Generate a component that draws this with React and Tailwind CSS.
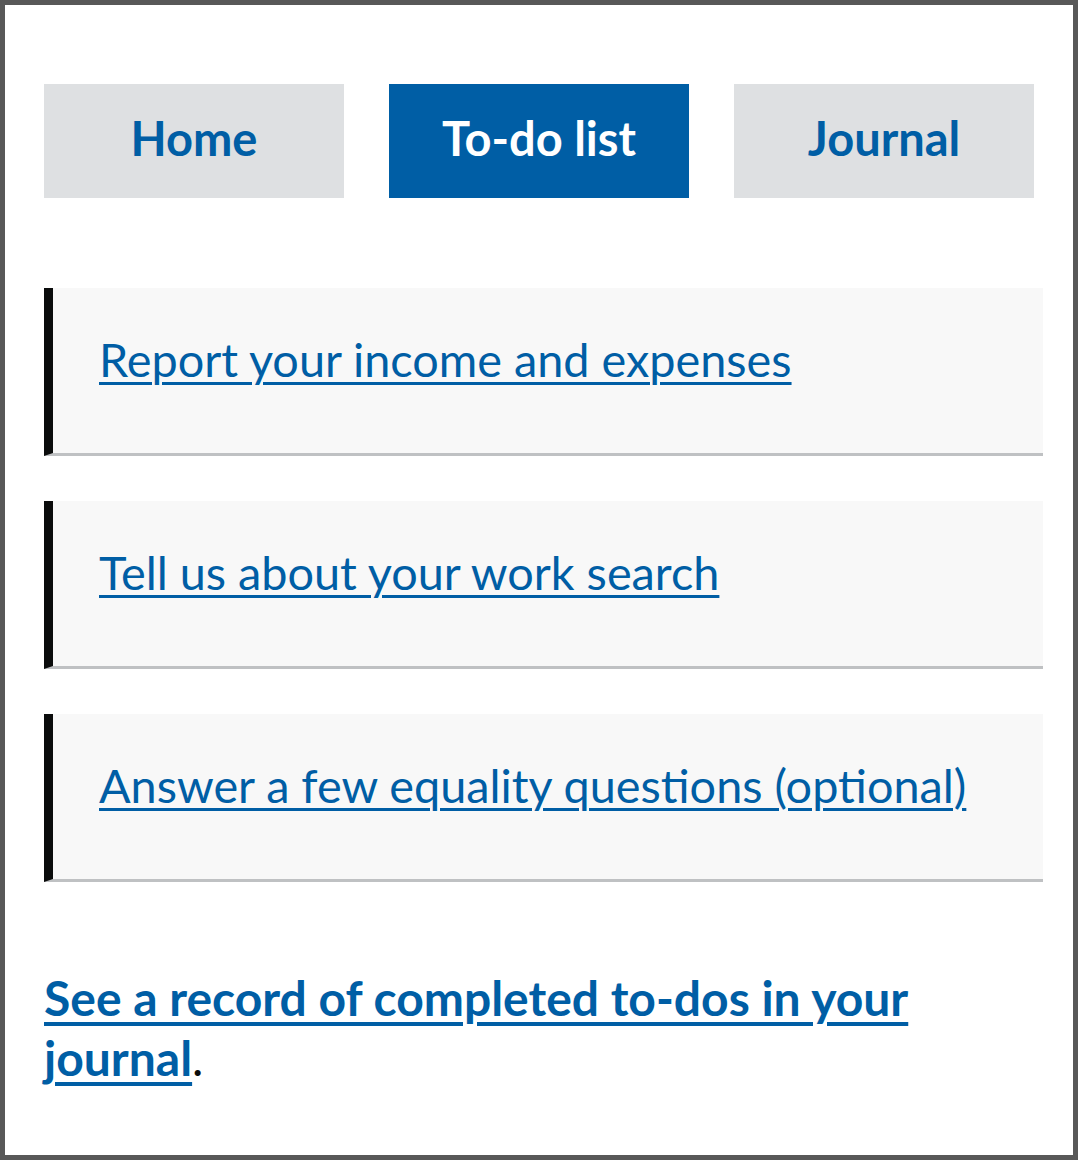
import React from "react";

const tabs = [
  { label: "Home", active: false },
  { label: "To-do list", active: true },
  { label: "Journal", active: false },
];

const todos = [
  "Report your income and expenses",
  "Tell us about your work search",
  "Answer a few equality questions (optional)",
];

const App = () => {
  return (
    <div
      className="h-[1160px] w-[1078px] border-[5px] border-[#585858] bg-white pl-[39px] pt-[79px]"
      style={{ fontFamily: "Lato, 'Noto Sans', sans-serif" }}
    >
      {/* Tabs */}
      <nav className="grid w-[990px] grid-cols-3 gap-[45px]">
        {tabs.map((tab) => (
          <a
            key={tab.label}
            href="#"
            className={
              tab.active
                ? "flex h-[114px] items-center justify-center bg-[#005ea5] pb-[6px] text-[47px] font-bold text-white"
                : "flex h-[114px] items-center justify-center bg-[#dee0e2] pb-[6px] text-[47px] font-bold text-[#005ea5]"
            }
          >
            {tab.label}
          </a>
        ))}
      </nav>

      {/* To-do items */}
      <ul className="mt-[90px] flex w-[999px] flex-col gap-[45px]">
        {todos.map((item) => (
          <li
            key={item}
            className="flex h-[168px] items-start border-b-[3px] border-l-[9px] border-b-[#bfc1c3] border-l-[#0b0c0c] bg-[#f8f8f8] pl-[46px] pt-[41px]"
          >
            <a
              href="#"
              className="text-[46.8px] leading-[60px] text-[#005ea5] underline decoration-[3px] underline-offset-[5px]"
            >
              {item}
            </a>
          </li>
        ))}
      </ul>

      <p className="mt-[86px] w-[900px] text-[48px] leading-[60px] text-[#0b0c0c]">
        <a
          href="#"
          className="font-bold text-[#005ea5] underline decoration-[4px] underline-offset-[6px]"
        >
          See a record of completed to-dos in your journal
        </a>
        .
      </p>
    </div>
  );
};

export default App;
